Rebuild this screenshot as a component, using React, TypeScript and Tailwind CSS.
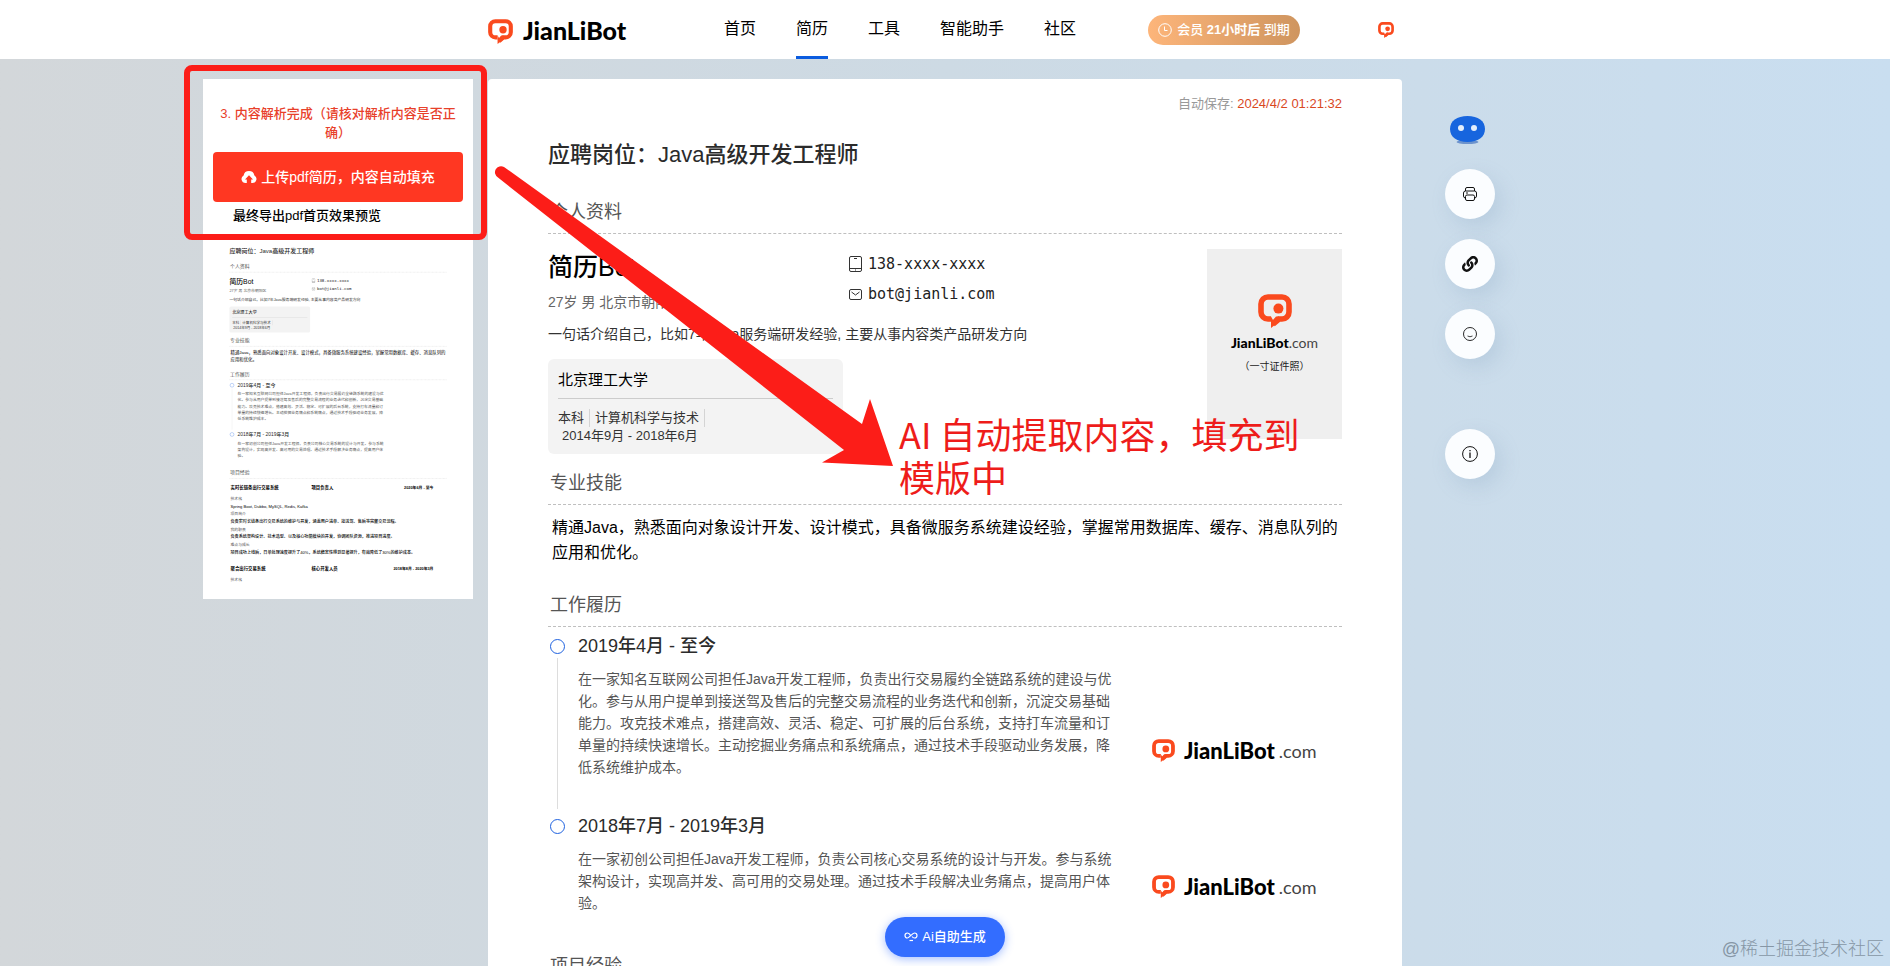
import type { ReactNode } from 'react';
import { FaLink } from 'react-icons/fa';

const navItems = [
  { label: '首页', active: false },
  { label: '简历', active: true },
  { label: '工具', active: false },
  { label: '智能助手', active: false },
  { label: '社区', active: false },
];

const jobs = [
  {
    period: '2019年4月 - 至今',
    text: '在一家知名互联网公司担任Java开发工程师，负责出行交易履约全链路系统的建设与优化。参与从用户提单到接送驾及售后的完整交易流程的业务迭代和创新，沉淀交易基础能力。攻克技术难点，搭建高效、灵活、稳定、可扩展的后台系统，支持打车流量和订单量的持续快速增长。主动挖掘业务痛点和系统痛点，通过技术手段驱动业务发展，降低系统维护成本。',
  },
  {
    period: '2018年7月 - 2019年3月',
    text: '在一家初创公司担任Java开发工程师，负责公司核心交易系统的设计与开发。参与系统架构设计，实现高并发、高可用的交易处理。通过技术手段解决业务痛点，提高用户体验。',
  },
];

const projects = [
  {
    name: '实时长链条出行交易系统',
    role: '项目负责人',
    period: '2020年6月 - 至今',
    details: [
      { label: '技术栈', text: 'Spring Boot, Dubbo, MySQL, Redis, Kafka' },
      { label: '项目简介', text: '负责实时长链条出行交易系统的维护与开发，涵盖用户进单、接送驾、售后等完整交易流程。' },
      { label: '我的职责', text: '负责系统架构设计、技术选型、以及核心功能模块的开发，协调团队资源，推进项目进度。' },
      { label: '难点与成长', text: '项目成功上线后，日单处理速度提升了40%，系统稳定性得到显著提升，有效降低了30%的维护成本。' },
    ],
  },
  {
    name: '聚合出行交易系统',
    role: '核心开发人员',
    period: '2018年8月 - 2020年3月',
    details: [{ label: '技术栈', text: '' }],
  },
];

function LogoMark({ className }: { className: string }) {
  return (
    <svg className={className} viewBox="0 0 34 34" fill="none">
      <path
        d="M13 25H10A7 7 0 0 1 3 18V10A7 7 0 0 1 10 3H24A7 7 0 0 1 31 10V18A7 7 0 0 1 24 25H21L15 30"
        stroke="#fa4a1e"
        strokeWidth="5.6"
      />
      <path d="M13 22.4V34L21 27.8V22.4L18 22.4L15 26Z" fill="#fa4a1e" />
      <circle cx="20.4" cy="14.6" r="5" fill="#fa4a1e" />
    </svg>
  );
}

function SectionTitle({ children, className }: { children: ReactNode; className: string }) {
  return (
    <h2 className={`border-b border-dashed border-[#bfbfbf] pb-[9px] pl-[2px] text-lg leading-6 text-[#555] ${className}`}>
      {children}
    </h2>
  );
}

function Resume({ thumbnail = false }: { thumbnail?: boolean }) {
  return (
    <div className="px-[60px] pt-[15px]">
      <div className="h-5 text-right text-[13px] leading-5 text-[#999]">
        {!thumbnail && (
          <>
            自动保存: <span className="text-[#d9481f]">2024/4/2 01:21:32</span>
          </>
        )}
      </div>
      <h1 className="mt-[26px] text-[22px] leading-[30px] font-medium text-[#2b2b2b]">应聘岗位：Java高级开发工程师</h1>

      {/* Personal info */}
      <SectionTitle className="mt-[30px]">个人资料</SectionTitle>
      <div className="mt-[15px] flex items-start justify-between">
        <div>
          <div className="flex">
            <div className="w-[301px] pt-[3px]">
              <div className="text-[25px] leading-[30px] font-medium text-black">简历Bot</div>
              <div className="mt-[10px] text-sm leading-5 text-[#666]">27岁 男 北京市朝阳区</div>
            </div>
            <div className="font-['DejaVu_Sans_Mono',monospace] text-[15px] leading-[30px] text-[#222]">
              <div className="flex items-center gap-[6px]">
                <svg className="h-4 w-[13px]" viewBox="0 0 13 16" fill="none" stroke="#333">
                  <rect x="0.5" y="0.5" width="12" height="15" rx="1.5" />
                  <path d="M0.5 12.5h12M6 14h1M5 2.5h3" />
                </svg>
                138-xxxx-xxxx
              </div>
              <div className="flex items-center gap-[6px]">
                <svg className="h-[11px] w-[13px]" viewBox="0 0 13 11" fill="none" stroke="#333">
                  <rect x="0.5" y="0.5" width="12" height="10" rx="1.5" />
                  <path d="M2.5 3l4 3 4-3" />
                </svg>
                bot@jianli.com
              </div>
            </div>
          </div>
          <div className="mt-3 text-sm leading-5 text-[#333]">
            一句话介绍自己，比如7年Java服务端研发经验, 主要从事内容类产品研发方向
          </div>
          <div className="mt-[15px] w-[295px] rounded-md bg-[#f3f3f3] px-[10px] pt-[11px] pb-[9px]">
            <div className="border-b border-[#ccc] pb-2 text-[15px] leading-5 text-black">北京理工大学</div>
            <div className="mt-[10px] flex text-[13px] leading-[18px] text-[#333]">
              <span className="border-r border-[#d4d4d4] pr-[5px]">本科</span>
              <span className="border-r border-[#d4d4d4] px-[5px]">计算机科学与技术</span>
            </div>
            <div className="pl-1 text-[13px] leading-[18px] text-[#333]">2014年9月 - 2018年6月</div>
          </div>
        </div>
        {!thumbnail && (
          <div className="flex h-[190px] w-[135px] flex-col items-center bg-[#efefef] pt-[45px]">
            <LogoMark className="h-[34px] w-[34px]" />
            <div className="mt-[5px] font-[Lato,sans-serif] text-[14px] leading-5 font-black whitespace-nowrap text-black">
              JianLiBot<span className="font-normal text-[#444]">.com</span>
            </div>
            <div className="mt-[6px] text-[10px] leading-4 text-[#222]">（一寸证件照）</div>
          </div>
        )}
      </div>

      {/* Skills */}
      <SectionTitle className="mt-[17px]">专业技能</SectionTitle>
      <p className="mt-[10px] pl-1 text-base leading-[25px] text-black">
        精通Java，熟悉面向对象设计开发、设计模式，具备微服务系统建设经验，掌握常用数据库、缓存、消息队列的应用和优化。
      </p>

      {/* Work history */}
      <SectionTitle className="mt-7">工作履历</SectionTitle>
      <div className="mt-[6px]">
        {jobs.map((job, index) => (
          <div key={job.period} className="flex">
            <div className="flex w-[30px] shrink-0 flex-col items-start pt-[6px] pl-[2px]">
              <span className="h-[15px] w-[15px] rounded-full border border-[#1f62e0]" />
              {index < jobs.length - 1 && <span className="mt-1 mb-1 ml-[7px] w-px flex-1 bg-[#ddd]" />}
            </div>
            <div className={`flex flex-1 items-end ${index < jobs.length - 1 ? 'pb-[35px]' : ''}`}>
              <div className="flex-1">
                <h3 className="text-lg leading-[26px] font-medium text-[#2b2b2b]">{job.period}</h3>
                <p className="mt-[9px] text-sm leading-[22px] text-[#555]">{job.text}</p>
              </div>
              <div className="flex w-56 items-center pb-[15px] pl-[34px]">
                {!thumbnail && (
                  <>
                    <LogoMark className="h-[25px] w-[23px]" />
                    <span className="ml-[9px] font-[Lato,sans-serif] text-[22px] leading-6 font-black text-black">JianLiBot</span>
                    <span className="ml-1 font-[Lato,sans-serif] text-lg leading-6 text-[#444]">.com</span>
                  </>
                )}
              </div>
            </div>
          </div>
        ))}
      </div>

      {/* Projects */}
      <SectionTitle className="mt-10">项目经验</SectionTitle>
      {thumbnail &&
        projects.map((project) => (
          <div key={project.name} className="mt-[22px] mb-[34px] pl-1 text-[15px] leading-7 text-black">
            <div className="flex pr-12 text-base leading-6 font-bold">
              <span className="w-[296px]">{project.name}</span>
              <span>{project.role}</span>
              <span className="ml-auto text-sm leading-6">{project.period}</span>
            </div>
            <div className="mt-[13px]">
              {project.details.map((detail) => (
                <div key={detail.label}>
                  <div className="text-sm leading-7 text-[#555]">{detail.label}</div>
                  {detail.text && <div className="font-medium">{detail.text}</div>}
                </div>
              ))}
            </div>
          </div>
        ))}
    </div>
  );
}

function ToolButton({ label, className = '', children }: { label: string; className?: string; children: ReactNode }) {
  return (
    <button
      type="button"
      aria-label={label}
      className={`flex h-[50px] w-[50px] items-center justify-center rounded-full bg-[#fbfdff] text-[#111] shadow-[6px_8px_20px_rgba(120,150,180,0.22)] ${className}`}
    >
      {children}
    </button>
  );
}

export default function App() {
  return (
    <div className="relative flex h-screen flex-col overflow-hidden bg-gradient-to-r from-[#d3d7da] via-[#cddae4] to-[#c9def0] font-['Liberation_Sans','Noto_Sans_CJK_SC',sans-serif]">
      <header className="shrink-0 bg-white">
        <div className="mx-auto flex h-[59px] max-w-[914px] items-center">
          <a href="#" className="flex items-center">
            <LogoMark className="mt-[3px] h-[25px] w-[25px]" />
            <span className="ml-[10px] font-[Lato,sans-serif] text-[25px] leading-[30px] font-black text-black">JianLiBot</span>
          </a>
          <nav className="ml-auto flex gap-10 self-stretch">
            {navItems.map((item) => (
              <a
                key={item.label}
                href="#"
                className={`border-b-[3px] pt-[17px] text-base leading-6 text-black ${item.active ? 'border-[#0b5cdf]' : 'border-transparent'}`}
              >
                {item.label}
              </a>
            ))}
          </nav>
          <div className="ml-[72px] flex h-[30px] w-[152px] items-center justify-center gap-[5px] rounded-full bg-gradient-to-r from-[#fdb57a] to-[#cf955f] text-[13px] font-medium text-white">
            <svg className="h-[14px] w-[14px]" viewBox="0 0 14 14" fill="none" stroke="white">
              <circle cx="7" cy="7" r="6.3" />
              <path d="M6.5 3.5V7.5H9.5" />
            </svg>
            <span>
              会员 <b>21小时后</b> 到期
            </span>
          </div>
          <a href="#" aria-label="我的" className="mr-2 ml-[78px]">
            <LogoMark className="h-4 w-4" />
          </a>
        </div>
      </header>

      <main className="grid min-h-0 flex-1 grid-cols-[270px_minmax(0,914px)_270px] items-start justify-center gap-x-[15px] pt-5">
        <aside className="relative bg-white px-[10px] pt-[25px]">
          <p className="text-center text-[13px] leading-[19px] font-medium text-[#e8402a]">
            3. 内容解析完成（请核对解析内容是否正确）
          </p>
          <button
            type="button"
            className="mt-[10px] flex h-[50px] w-full items-center justify-center gap-1 rounded bg-[#ff3722] text-sm font-medium text-white"
          >
            <svg className="h-3 w-4" viewBox="0 0 16 12" fill="currentColor">
              <path d="M4.500 12A4 4 0 0 1 2.600 4.500A5.500 5.500 0 0 1 13.400 4.500A4 4 0 0 1 11.500 12H10.200V8.500H12L8 4.200L4 8.500H5.800V12Z" />
            </svg>
            上传pdf简历，内容自动填充
          </button>
          <div className="mt-1 pl-5 text-[13px] leading-5 font-medium text-black">最终导出pdf首页效果预览</div>
          <div className="mt-1 h-[369px] w-[250px] overflow-hidden" aria-hidden="true">
            <div className="w-[914px] origin-top-left scale-[0.2735]">
              <Resume thumbnail />
            </div>
          </div>
          <div className="pointer-events-none absolute -top-[14px] -left-[19px] h-[175px] w-[303px] rounded-lg border-[6px] border-[#fc1d18]" />
        </aside>

        <section className="relative h-full rounded-t bg-white">
          <Resume />
          <svg className="pointer-events-none absolute top-20 left-0 h-[320px] w-[420px]" viewBox="0 0 420 320" fill="#fc1d18">
            <path d="M16 8L374 265L382 240L405 307L334 303.500L356 291L10 18.500A6 6 0 0 1 16 8Z" />
          </svg>
          <p className="absolute top-[333px] left-[411px] w-[420px] font-['Noto_Sans_CJK_SC',sans-serif] text-4xl leading-[43px] text-[#ee1c1a]">
            AI 自动提取内容，填充到模版中
          </p>
        </section>

        <div className="flex flex-col items-start pl-7">
          <button type="button" aria-label="智能助手" className="mt-9 ml-[5px]">
            <svg className="h-[30px] w-[36px]" viewBox="0 0 36 30">
              <ellipse cx="17.500" cy="27" rx="11" ry="2" fill="#6d93cc" />
              <path d="M17.500 1C28 1 35 6 35 14S28 27 17.500 27 0 22 0 14 7 1 17.500 1Z" fill="#1765de" />
              <circle cx="11" cy="13" r="3" fill="#e4eefc" />
              <circle cx="24" cy="13" r="3" fill="#e4eefc" />
            </svg>
          </button>
          <ToolButton label="打印" className="mt-[24px]">
            <svg className="h-[14px] w-[14px]" viewBox="0 0 14 14" fill="none" stroke="currentColor">
              <path d="M2.500 4V2A1.500 1.500 0 0 1 4 .5H10A1.500 1.500 0 0 1 11.500 2V4" />
              <path d="M2.500 11A2 2 0 0 1 .5 9V6A2 2 0 0 1 2.500 4H11.500A2 2 0 0 1 13.500 6V9A2 2 0 0 1 11.500 11" />
              <rect x="2.500" y="8" width="9" height="5.500" rx="1.500" />
              <path d="M3 6H5" />
            </svg>
          </ToolButton>
          <ToolButton label="复制链接" className="mt-5">
            <FaLink className="h-4 w-4" />
          </ToolButton>
          <ToolButton label="反馈" className="mt-5">
            <svg className="h-[14px] w-[14px]" viewBox="0 0 14 14" fill="none" stroke="currentColor">
              <circle cx="7" cy="7" r="6.500" strokeWidth="0.9" />
              <path d="M4.500 9Q7 10.500 9.500 9" strokeWidth="0.8" />
            </svg>
          </ToolButton>
          <ToolButton label="关于" className="mt-[70px]">
            <svg className="h-4 w-4" viewBox="0 0 16 16" fill="none" stroke="currentColor">
              <circle cx="8" cy="8" r="7.400" />
              <path d="M8 6.500V12M8 4V5.200" strokeWidth="1.300" />
            </svg>
          </ToolButton>
        </div>
      </main>

      <button
        type="button"
        className="absolute bottom-[9px] left-1/2 flex h-10 w-[120px] -translate-x-1/2 items-center justify-center gap-1 rounded-full bg-[#336dff] text-[13px] font-medium text-white shadow-[0_2px_10px_rgba(51,109,255,0.45)]"
      >
        <svg className="h-[10px] w-[14px]" viewBox="0 0 14 10" fill="none" stroke="white" strokeWidth="1.200">
          <path d="M7 4C5.500 1.500 4.500 1 3.500 1A2.500 2.500 0 0 0 3.500 6C5.500 6 8 1 10.500 1A2.500 2.500 0 0 1 10.500 6C9.500 6 8.700 5.500 8 4.500" />
          <path d="M5.500 8.500H9" />
        </svg>
        Ai自助生成
      </button>
      <div className="absolute right-[6px] bottom-[5px] text-lg leading-6 font-light text-[#8696a5]">@稀土掘金技术社区</div>
    </div>
  );
}
